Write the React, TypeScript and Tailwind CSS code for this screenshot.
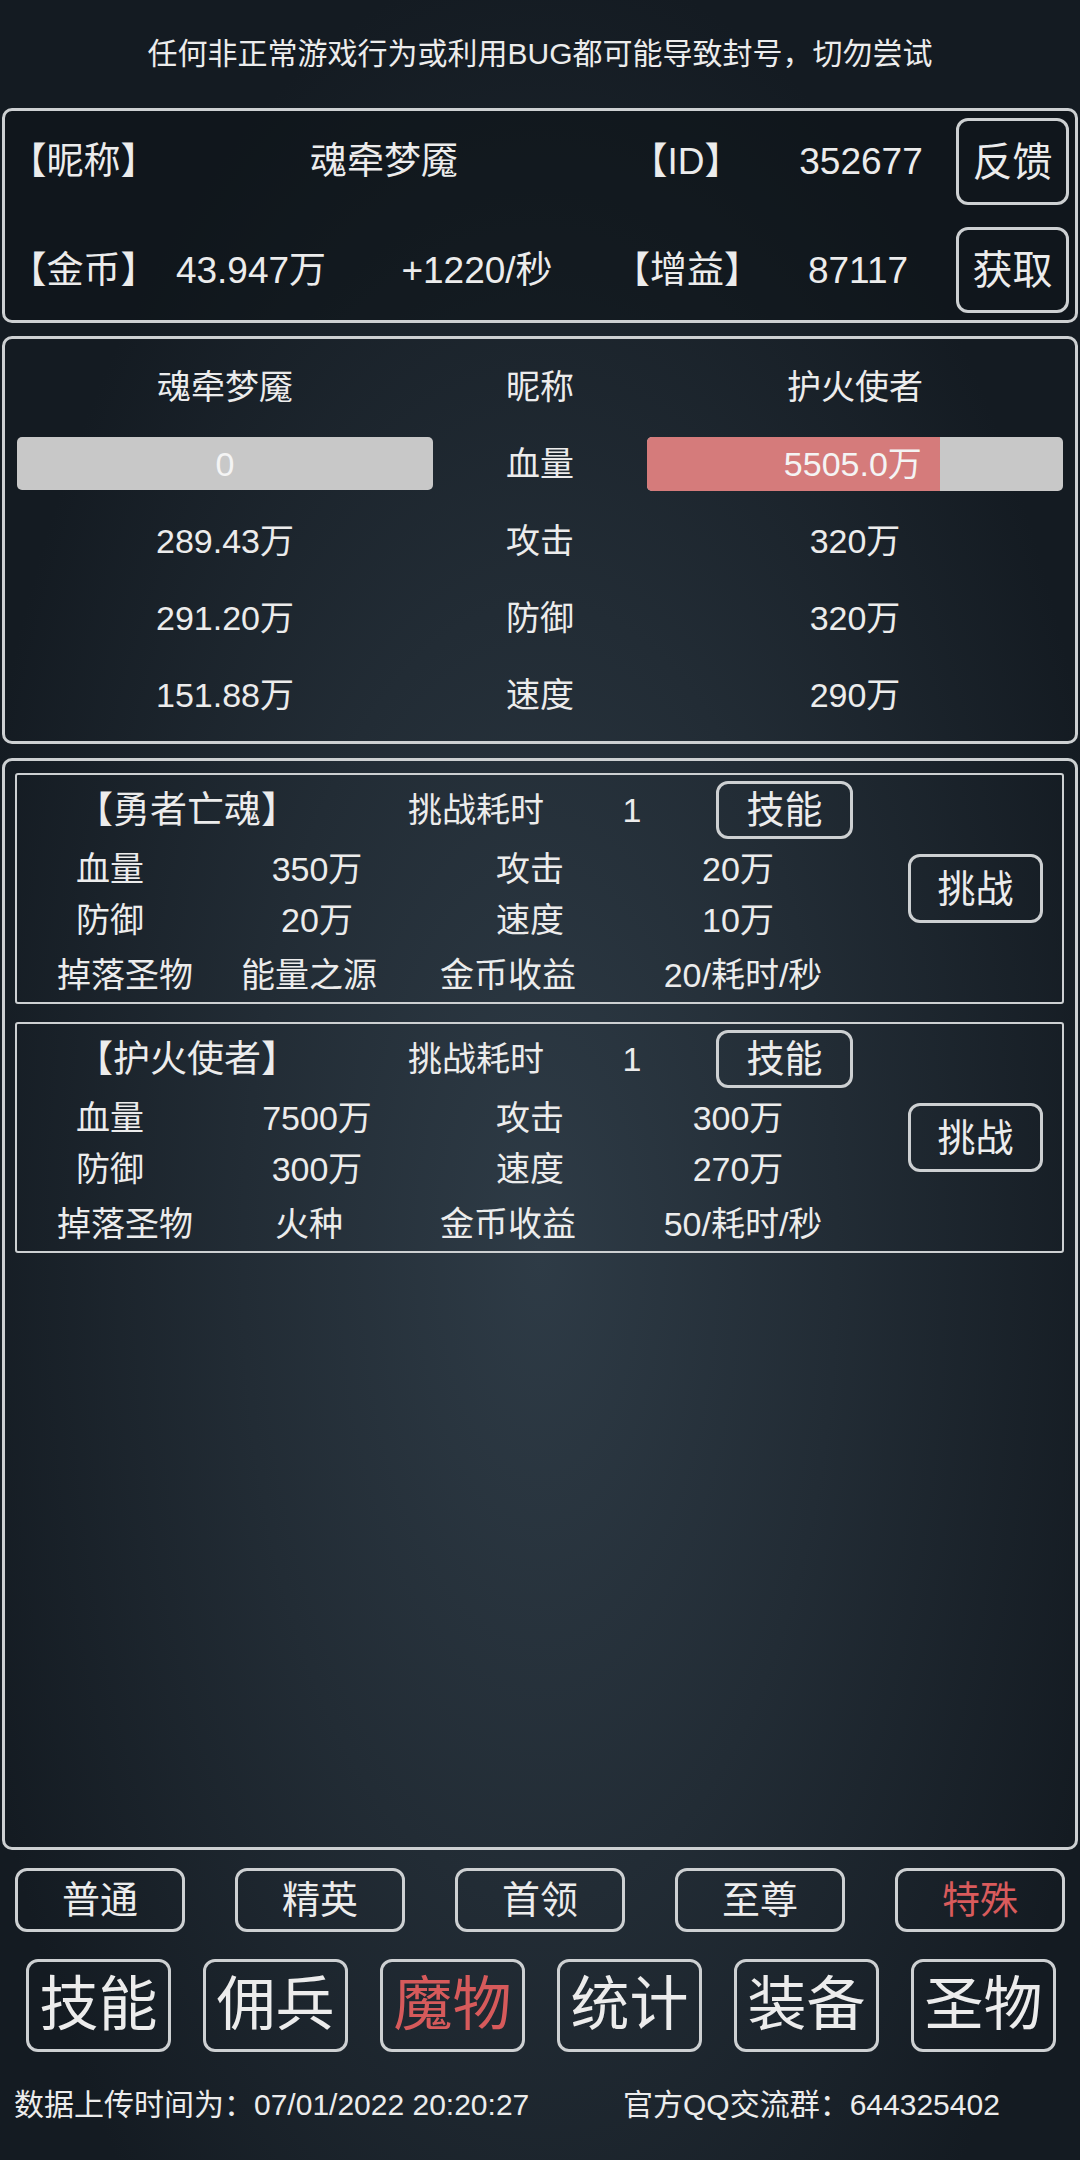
import React from "react";

const BR = "[font-feature-settings:'halt']";

function Cell({ w, children, className = "" }: { w: string; children?: React.ReactNode; className?: string }) {
  return <div className={`${w} flex items-center justify-center whitespace-nowrap ${className}`}>{children}</div>;
}

function Monster({
  name,
  hp,
  atk,
  def,
  spd,
  drop,
  gold,
}: {
  name: string;
  hp: string;
  atk: string;
  def: string;
  spd: string;
  drop: string;
  gold: string;
}) {
  return (
    <div className="h-[231px] border-2 border-[#cdd0d2] rounded-[3px] flex">
      <div className="w-[838px] flex flex-col text-[34px] leading-none">
        <div className="h-[70px] flex items-center">
          <Cell w="w-[340px]" className={`text-[37px] ${BR}`}>【{name}】</Cell>
          <Cell w="w-[238px]">挑战耗时</Cell>
          <Cell w="w-[74px]">1</Cell>
          <div className="ml-[47px] w-[137px] h-[58px] border-[3px] border-[#cdd0d2] rounded-[12px] flex items-center justify-center text-[38px]">
            技能
          </div>
        </div>
        <div className="h-[48px] flex items-center">
          <Cell w="w-[186px]">血量</Cell>
          <Cell w="w-[228px]">{hp}</Cell>
          <Cell w="w-[198px]">攻击</Cell>
          <Cell w="w-[218px]">{atk}</Cell>
        </div>
        <div className="h-[54px] flex items-center">
          <Cell w="w-[186px]">防御</Cell>
          <Cell w="w-[228px]">{def}</Cell>
          <Cell w="w-[198px]">速度</Cell>
          <Cell w="w-[218px]">{spd}</Cell>
        </div>
        <div className="h-[55px] flex items-center">
          <Cell w="w-[216px]">掉落圣物</Cell>
          <Cell w="w-[152px]">{drop}</Cell>
          <Cell w="w-[246px]">金币收益</Cell>
          <Cell w="w-[224px]">{gold}</Cell>
        </div>
      </div>
      <div className="ml-[53px] mt-[79px] w-[135px] h-[69px] border-[3px] border-[#cdd0d2] rounded-[12px] flex items-center justify-center text-[38px] leading-none">
        挑战
      </div>
    </div>
  );
}

export default function App() {
  const tiers = ["普通", "精英", "首领", "至尊", "特殊"];
  const navs = ["技能", "佣兵", "魔物", "统计", "装备", "圣物"];
  return (
    <div className="w-[1080px] h-[2160px] overflow-hidden text-[#ececec] font-['Liberation_Sans','Noto_Sans_CJK_SC',sans-serif] bg-[#151c23] bg-[radial-gradient(ellipse_55%_60%_at_50%_58%,#2e3b46_0%,#222c35_50%,#141b22_100%)]">
      {/* warning */}
      <div className="h-[108px] flex items-center justify-center text-[30px] leading-none">
        任何非正常游戏行为或利用BUG都可能导致封号，切勿尝试
      </div>

      {/* panel 1 */}
      <div className="mx-[2px] h-[215px] rounded-[10px] border-[3px] border-[#cdd0d2] bg-[#0c1116]/50 py-[7px] flex flex-col gap-[22px] text-[37px] leading-none">
        <div className="h-[87px] flex items-center">
          <Cell w="w-[157px]" className={BR}>【昵称】</Cell>
          <Cell w="w-[444px]">魂牵梦魇</Cell>
          <Cell w="w-[160px]" className={BR}>【ID】</Cell>
          <Cell w="w-[190px]">352677</Cell>
          <div className="w-[113px] h-[87px] border-[3px] border-[#cdd0d2] rounded-[12px] flex items-center justify-center text-[40px]">
            反馈
          </div>
        </div>
        <div className="h-[86px] flex items-center">
          <Cell w="w-[157px]" className={BR}>【金币】</Cell>
          <Cell w="w-[178px]">43.947万</Cell>
          <Cell w="w-[274px]">+1220/秒</Cell>
          <Cell w="w-[146px]" className={BR}>【增益】</Cell>
          <Cell w="w-[196px]">87117</Cell>
          <div className="w-[113px] h-[86px] border-[3px] border-[#cdd0d2] rounded-[12px] flex items-center justify-center text-[40px]">
            获取
          </div>
        </div>
      </div>

      {/* panel 2 */}
      <div className="mx-[2px] mt-[13px] h-[408px] rounded-[10px] border-[3px] border-[#cdd0d2] pt-[9px] pl-[12px] text-[34px] leading-none">
        <div className="h-[77px] flex items-center">
          <Cell w="w-[416px]">魂牵梦魇</Cell>
          <Cell w="w-[214px]">昵称</Cell>
          <Cell w="w-[416px]">护火使者</Cell>
        </div>
        <div className="h-[77px] flex items-center">
          <div className="w-[416px] h-[53px] rounded-[5px] bg-[#c8c8c8] flex items-center justify-center text-[#f4f4f4]">0</div>
          <Cell w="w-[214px]">血量</Cell>
          <div className="w-[416px] h-[54px] rounded-[5px] bg-[#c8c8c8] flex overflow-hidden">
            <div
              className="h-full bg-[#d57b7b] flex items-center justify-end pr-[18px] text-[#f4f4f4]"
              style={{ width: "70.4%" }}
            >
              5505.0万
            </div>
          </div>
        </div>
        <div className="h-[77px] flex items-center">
          <Cell w="w-[416px]">289.43万</Cell>
          <Cell w="w-[214px]">攻击</Cell>
          <Cell w="w-[416px]">320万</Cell>
        </div>
        <div className="h-[77px] flex items-center">
          <Cell w="w-[416px]">291.20万</Cell>
          <Cell w="w-[214px]">防御</Cell>
          <Cell w="w-[416px]">320万</Cell>
        </div>
        <div className="h-[77px] flex items-center">
          <Cell w="w-[416px]">151.88万</Cell>
          <Cell w="w-[214px]">速度</Cell>
          <Cell w="w-[416px]">290万</Cell>
        </div>
      </div>

      {/* panel 3 */}
      <div className="mx-[2px] mt-[14px] h-[1092px] rounded-[10px] border-[3px] border-[#cdd0d2] pt-[12px] pl-[10px] pr-[11px] flex flex-col gap-[18px]">
        <Monster name="勇者亡魂" hp="350万" atk="20万" def="20万" spd="10万" drop="能量之源" gold="20/耗时/秒" />
        <Monster name="护火使者" hp="7500万" atk="300万" def="300万" spd="270万" drop="火种" gold="50/耗时/秒" />
      </div>

      {/* tiers */}
      <div className="mt-[18px] h-[64px] px-[15px] flex justify-between">
        {tiers.map((t) => (
          <div
            key={t}
            className={`w-[170px] h-[64px] border-[3px] border-[#cdd0d2] rounded-[12px] flex items-center justify-center text-[38px] leading-none ${
              t === "特殊" ? "text-[#d95b5c]" : ""
            }`}
          >
            {t}
          </div>
        ))}
      </div>

      {/* nav */}
      <div className="mt-[27px] h-[93px] pl-[26px] flex gap-[32px]">
        {navs.map((t) => (
          <div
            key={t}
            className={`w-[145px] h-[93px] border-[3px] border-[#cdd0d2] rounded-[12px] flex items-center justify-center text-[59px] leading-none ${
              t === "魔物" ? "text-[#d65a5b]" : ""
            }`}
          >
            {t}
          </div>
        ))}
      </div>

      {/* footer */}
      <div className="h-[106px] flex items-center text-[30px] leading-none">
        <div className="w-[623px] pl-[14px] whitespace-nowrap">数据上传时间为：07/01/2022 20:20:27</div>
        <div className="whitespace-nowrap">官方QQ交流群：644325402</div>
      </div>
    </div>
  );
}
